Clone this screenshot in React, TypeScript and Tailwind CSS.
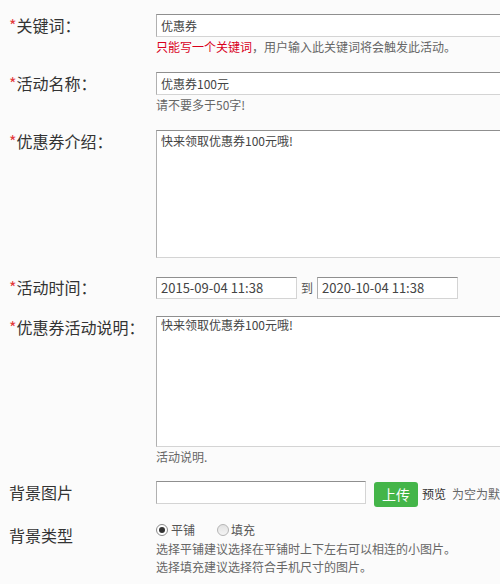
import React from "react";

const field =
  "block shrink-0 border border-[#d4d4d4] border-t-[#8f8f8f] border-l-[#b0b0b0] bg-white outline-none text-[12px] text-[#444] px-[4px]";

function Label({ text, star = true, className = "" }: { text: string; star?: boolean; className?: string }) {
  return (
    <div className={`pl-[9px] text-[16px] leading-[23px] text-[#333] whitespace-nowrap ${className}`}>
      {star && <span className="text-[#e3393c]">*</span>}
      {text}
    </div>
  );
}

export default function App() {
  return (
    <div className="w-[500px] h-[584px] overflow-hidden bg-[#fbfbfb] pt-[14px] leading-[20px] font-['Noto_Sans_CJK_SC','Microsoft_YaHei',sans-serif]">
      <div className="grid grid-cols-[156px_1fr]">
        {/* keyword */}
        <Label text="关键词：" />
        <div className="min-w-0">
          <input readOnly value="优惠券" className={`${field} w-[400px] h-[23px] leading-[21px]`} />
          <p className="text-[12px] leading-[20px] text-[#666] whitespace-nowrap">
            <span className="text-[#d9001b]">只能写一个关键词</span>，用户输入此关键词将会触发此活动。
          </p>
        </div>

        {/* activity name */}
        <Label text="活动名称：" className="mt-[15px]" />
        <div className="min-w-0 mt-[15px]">
          <input readOnly value="优惠券100元" className={`${field} w-[400px] h-[23px] leading-[21px]`} />
          <p className="text-[12px] leading-[20px] text-[#666]">请不要多于50字!</p>
        </div>

        {/* coupon intro */}
        <Label text="优惠券介绍：" className="mt-[15px]" />
        <div className="min-w-0 mt-[15px]">
          <textarea
            readOnly
            value="快来领取优惠券100元哦!"
            className={`${field} w-[400px] h-[128px] leading-[16px] pt-[2px] resize-none`}
          />
        </div>

        {/* time */}
        <Label text="活动时间：" className="mt-[18px] leading-[22px]" />
        <div className="min-w-0 mt-[18px] flex items-center">
          <input readOnly value="2015-09-04 11:38" className={`${field} w-[141px] h-[22px] text-[13px]`} />
          <span className="shrink-0 text-[12px] text-[#555] mx-[4px]">到</span>
          <input readOnly value="2020-10-04 11:38" className={`${field} w-[141px] h-[22px] text-[13px]`} />
        </div>

        {/* description */}
        <Label text="优惠券活动说明：" className="mt-[17px]" />
        <div className="min-w-0 mt-[17px]">
          <textarea
            readOnly
            value="快来领取优惠券100元哦!"
            className={`${field} w-[400px] h-[131px] leading-[16px] pt-[0px] resize-none`}
          />
          <p className="text-[12px] leading-[20px] text-[#666]">活动说明.</p>
        </div>

        {/* background image */}
        <Label text="背景图片" star={false} className="mt-[14px]" />
        <div className="min-w-0 mt-[14px] flex items-start whitespace-nowrap">
          <input readOnly value="" className={`${field} w-[210px] h-[23px]`} />
          <button
            type="button"
            className="shrink-0 ml-[8px] mt-[1px] w-[44px] h-[25px] rounded-[3px] bg-[#44b549] text-white text-[14px] leading-[25px] text-center"
          >
            上传
          </button>
          <span className="shrink-0 ml-[4px] text-[12px] leading-[25px] text-[#333]">预览</span>
          <span className="shrink-0 ml-[6px] text-[12px] leading-[25px] text-[#666]">为空为默认背景图片</span>
        </div>

        {/* background type */}
        <Label text="背景类型" star={false} className="mt-[16px] leading-[24px]" />
        <div className="min-w-0 mt-[13px] whitespace-nowrap">
          <div className="flex items-center h-[20px] text-[12px] text-[#555]">
            <span className="w-[12px] h-[12px] rounded-full border border-[#8a8a8a] bg-white flex items-center justify-center">
              <span className="w-[6px] h-[6px] rounded-full bg-[#333]" />
            </span>
            <span className="ml-[3px]">平铺</span>
            <span className="ml-[22px] w-[12px] h-[12px] rounded-full border border-[#b5b5b5] bg-gradient-to-b from-[#e2e2e2] to-[#f4f4f4]" />
            <span className="ml-[2px]">填充</span>
          </div>
          <p className="text-[12px] leading-[18px] text-[#666]">选择平铺建议选择在平铺时上下左右可以相连的小图片。</p>
          <p className="text-[12px] leading-[18px] text-[#666]">选择填充建议选择符合手机尺寸的图片。</p>
        </div>
      </div>
    </div>
  );
}
